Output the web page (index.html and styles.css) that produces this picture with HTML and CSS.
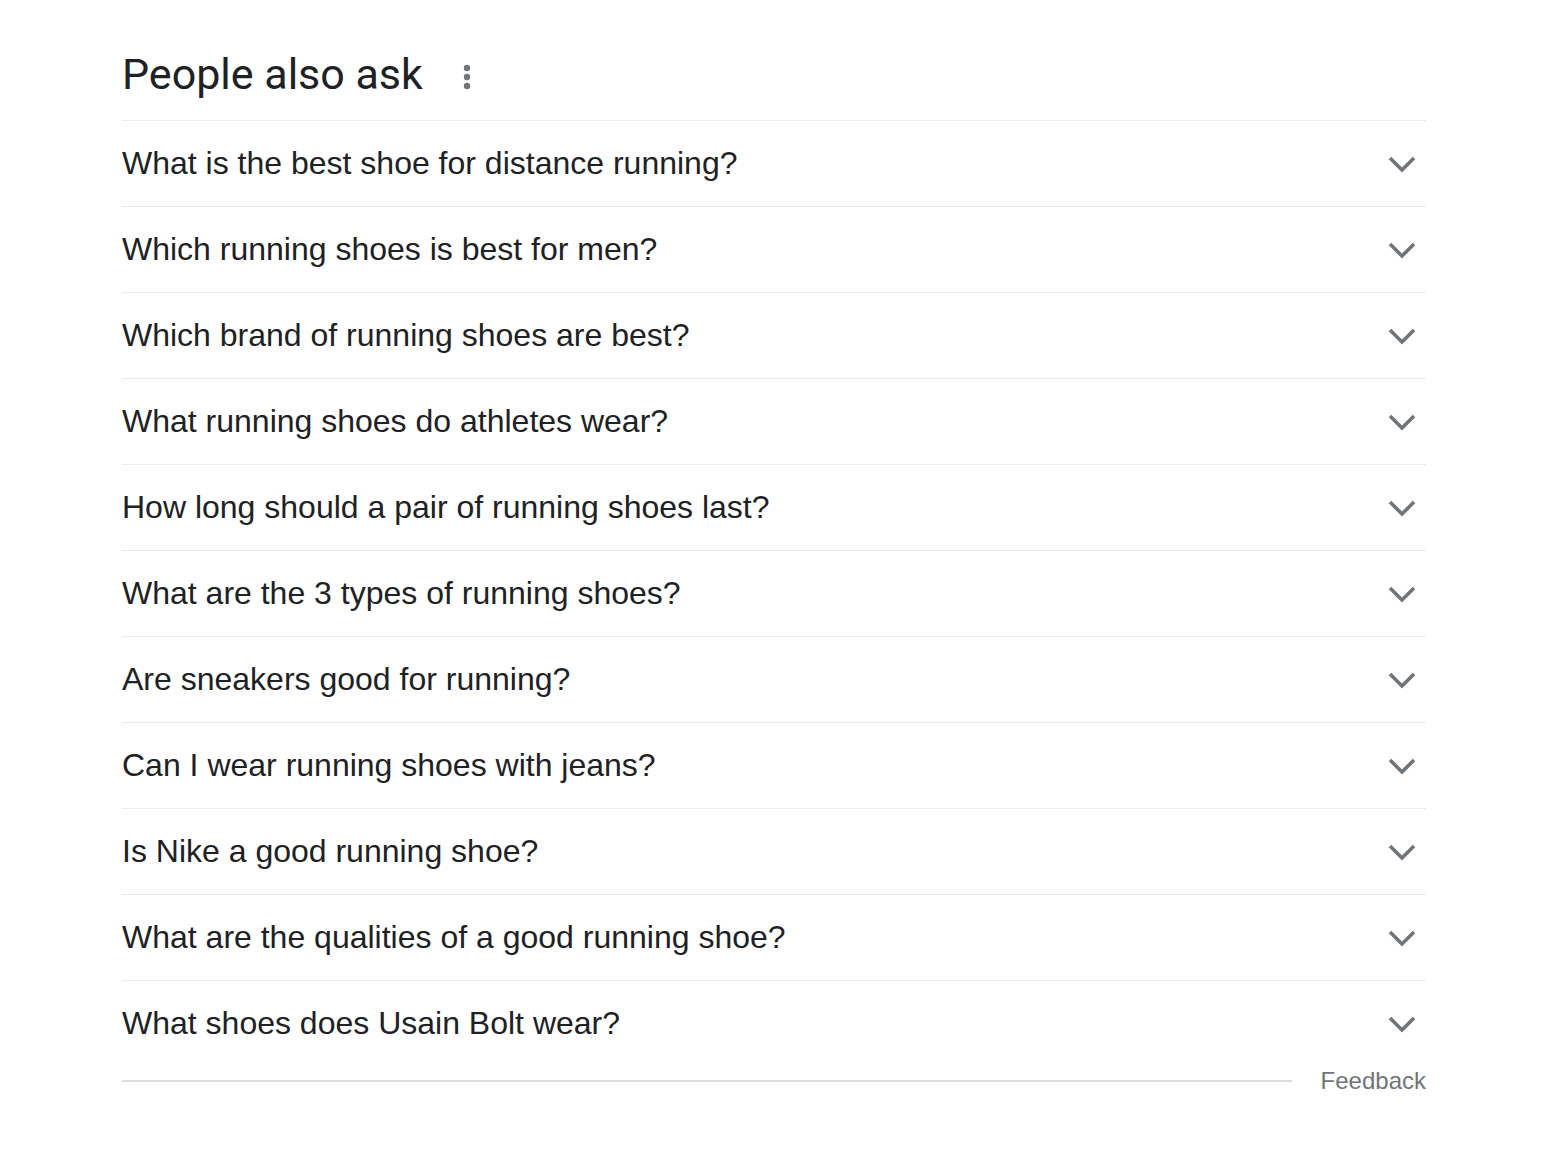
FILE: index.html
```html
<!DOCTYPE html>
<html>
<head>
<meta charset="utf-8">
<link rel="stylesheet" href="styles.css">
</head>
<body>
<div class="paa">
  <div class="paa-head">
    <h2 class="paa-title">People also ask</h2>
    <span class="paa-more"><svg width="10" height="28" viewBox="0 0 10 28"><circle cx="5" cy="5" r="3.2"/><circle cx="5" cy="14" r="3.2"/><circle cx="5" cy="23" r="3.2"/></svg></span>
  </div>
  <div class="paa-list">
    <div class="q"><span class="q-text">What is the best shoe for distance running?</span><svg class="chev" viewBox="0 0 24 24"><path d="M4 8l8 8 8-8"/></svg></div>
    <div class="q"><span class="q-text">Which running shoes is best for men?</span><svg class="chev" viewBox="0 0 24 24"><path d="M4 8l8 8 8-8"/></svg></div>
    <div class="q"><span class="q-text">Which brand of running shoes are best?</span><svg class="chev" viewBox="0 0 24 24"><path d="M4 8l8 8 8-8"/></svg></div>
    <div class="q"><span class="q-text">What running shoes do athletes wear?</span><svg class="chev" viewBox="0 0 24 24"><path d="M4 8l8 8 8-8"/></svg></div>
    <div class="q"><span class="q-text">How long should a pair of running shoes last?</span><svg class="chev" viewBox="0 0 24 24"><path d="M4 8l8 8 8-8"/></svg></div>
    <div class="q"><span class="q-text">What are the 3 types of running shoes?</span><svg class="chev" viewBox="0 0 24 24"><path d="M4 8l8 8 8-8"/></svg></div>
    <div class="q"><span class="q-text">Are sneakers good for running?</span><svg class="chev" viewBox="0 0 24 24"><path d="M4 8l8 8 8-8"/></svg></div>
    <div class="q"><span class="q-text">Can I wear running shoes with jeans?</span><svg class="chev" viewBox="0 0 24 24"><path d="M4 8l8 8 8-8"/></svg></div>
    <div class="q"><span class="q-text">Is Nike a good running shoe?</span><svg class="chev" viewBox="0 0 24 24"><path d="M4 8l8 8 8-8"/></svg></div>
    <div class="q"><span class="q-text">What are the qualities of a good running shoe?</span><svg class="chev" viewBox="0 0 24 24"><path d="M4 8l8 8 8-8"/></svg></div>
    <div class="q"><span class="q-text">What shoes does Usain Bolt wear?</span><svg class="chev" viewBox="0 0 24 24"><path d="M4 8l8 8 8-8"/></svg></div>
  </div>
  <div class="paa-foot">
    <div class="foot-line"></div>
    <span class="feedback">Feedback</span>
  </div>
</div>
</body>
</html>
```

FILE: styles.css
```css
html, body {
  margin: 0;
  padding: 0;
  background: #fff;
}
.paa {
  width: 1304px;
  margin-left: 122px;
  font-family: "Liberation Sans", Arial, sans-serif;
  color: #202124;
}
.paa-head {
  height: 120px;
  display: flex;
  align-items: center;
  border-bottom: 1px solid #e8eaed;
}
.paa-title {
  margin: 0;
  font-family: Roboto, "Open Sans", sans-serif;
  font-weight: 400;
  font-size: 43px;
  line-height: 1;
  color: #202124;
  padding-top: 28px;
}
.paa-more {
  margin-left: 39px;
  padding-top: 34px;
  display: flex;
}
.paa-more svg {
  fill: #70757a;
}
.q {
  height: 85px;
  display: flex;
  align-items: center;
  justify-content: space-between;
  border-bottom: 1px solid #e8eaed;
}
.q:last-child {
  border-bottom: none;
}
.q-text {
  font-size: 32px;
  line-height: 1;
  margin-top: -2px;
}
.chev {
  width: 36px;
  height: 36px;
  margin-right: 6px;
  fill: none;
  stroke: #70757a;
  stroke-width: 2.4;
}
.paa-foot {
  display: flex;
  align-items: center;
  height: 30px;
}
.foot-line {
  flex: 1;
  height: 0;
  border-top: 2px solid #dadce0;
}
.feedback {
  margin-left: 29px;
  font-size: 24px;
  color: #70757a;
}
```
